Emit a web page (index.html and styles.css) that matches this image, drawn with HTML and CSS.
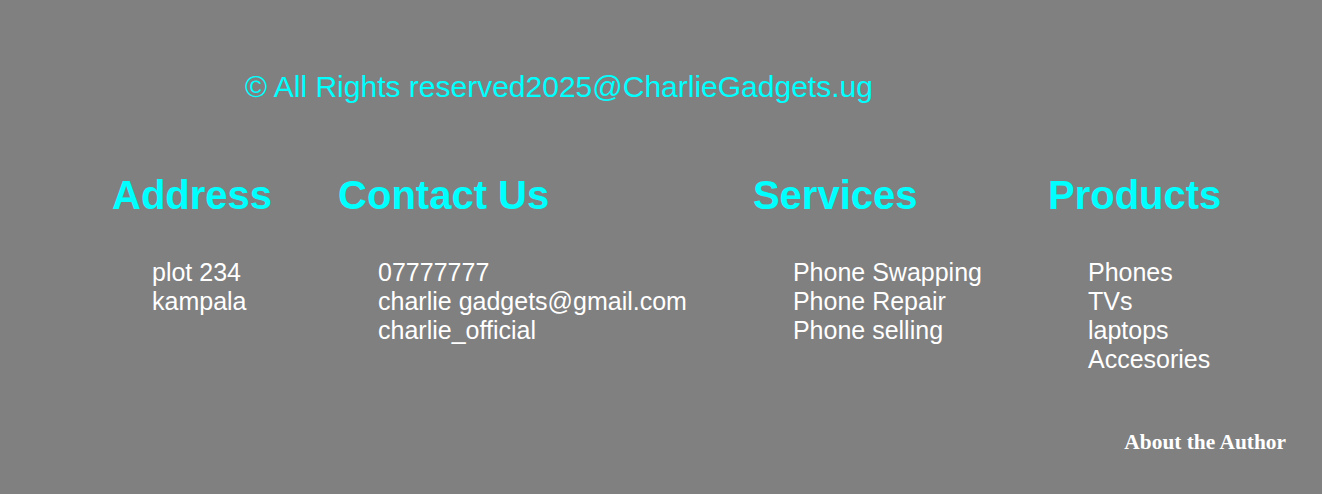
FILE: index.html
```html
<!DOCTYPE html>
<html lang="en">
<head>
<meta charset="utf-8">
<title>Charlie Gadgets</title>
<link rel="stylesheet" href="styles.css">
</head>
<body>
<footer class="footer">
  <p class="copyright">&copy; All Rights reserved2025@CharlieGadgets.ug</p>
  <div class="columns">
    <div class="col">
      <h2 class="col-title">Address</h2>
      <ul class="col-list">
        <li>plot 234</li>
        <li>kampala</li>
      </ul>
    </div>
    <div class="col">
      <h2 class="col-title">Contact Us</h2>
      <ul class="col-list">
        <li>07777777</li>
        <li>charlie gadgets@gmail.com</li>
        <li>charlie_official</li>
      </ul>
    </div>
    <div class="col">
      <h2 class="col-title">Services</h2>
      <ul class="col-list">
        <li>Phone Swapping</li>
        <li>Phone Repair</li>
        <li>Phone selling</li>
      </ul>
    </div>
    <div class="col">
      <h2 class="col-title">Products</h2>
      <ul class="col-list">
        <li>Phones</li>
        <li>TVs</li>
        <li>laptops</li>
        <li>Accesories</li>
      </ul>
    </div>
  </div>
  <div class="author"><a class="author-link">About the Author</a></div>
</footer>
</body>
</html>
```

FILE: styles.css
```css
html, body {
  margin: 0;
  padding: 0;
  background: #808080;
}

body {
  font-family: "Liberation Sans", Arial, sans-serif;
}

.footer {
  padding-top: 70px;
}

.copyright {
  margin: 0 0 0 245px;
  font-size: 30px;
  line-height: 34px;
  color: #00ffff;
}

.columns {
  display: flex;
  gap: 66px;
  padding-left: 112px;
  margin-top: 68px;
}

.col-title {
  margin: 0;
  font-size: 40px;
  line-height: 46px;
  font-weight: bold;
  color: #00ffff;
}

.col-list {
  margin: 40px 0 0;
  padding-left: 40px;
  list-style: none;
  font-size: 25px;
  line-height: 29px;
  color: #ffffff;
}

.author {
  margin-top: 56px;
  padding-right: 36px;
  text-align: right;
}

.author-link {
  font-family: "Liberation Serif", "Times New Roman", serif;
  font-weight: bold;
  font-size: 21.4px;
  line-height: 24px;
  color: #ffffff;
}
```
